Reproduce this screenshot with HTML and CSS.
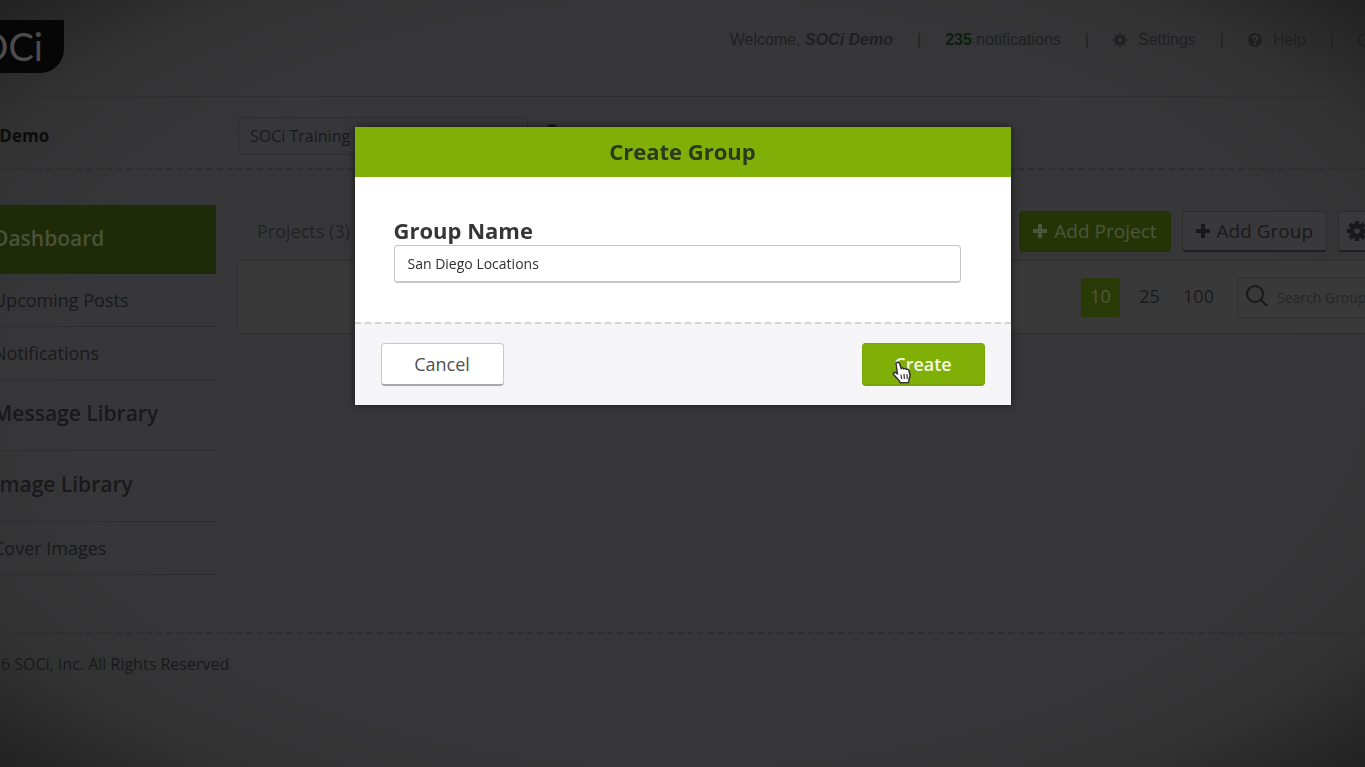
FILE: index.html
```html
<!DOCTYPE html>
<html lang="en">
<head>
    <meta charset="UTF-8">
    <meta name="viewport" content="width=device-width, initial-scale=1.0">
    <title>SOCi - Create Group</title>
    <link rel="stylesheet" href="styles.css">
</head>
<body>
    <div class="page">
        <header class="header">
            <a class="logo" href="#">SOCi</a>
            <nav class="top-nav">
                <span>Welcome, <b><i>SOCi Demo</i></b></span>
                <span class="sep">|</span>
                <a href="#"><b class="count">235</b> notifications</a>
                <span class="sep">|</span>
                <a class="with-icon" href="#">
                    <svg width="14" height="14" viewBox="0 0 16 16"><circle cx="8" cy="8" r="4" fill="none" stroke="currentColor" stroke-width="3"/><path d="M8 0v3M8 13v3M0 8h3M13 8h3M2.3 2.3l2.2 2.2M11.5 11.5l2.2 2.2M2.3 13.7l2.2-2.2M11.5 4.5l2.2-2.2" stroke="currentColor" stroke-width="2.6"/></svg>
                    Settings
                </a>
                <span class="sep">|</span>
                <a class="with-icon" href="#">
                    <svg width="14" height="14" viewBox="0 0 16 16"><circle cx="8" cy="8" r="8" fill="currentColor"/><path d="M5.6 6.2c0-3.2 5-3.2 5 0 0 1.8-2.4 1.8-2.4 3.6M8.2 11.2v1.8" fill="none" stroke="#39393a" stroke-width="1.8"/></svg>
                    Help
                </a>
                <span class="sep">|</span>
                <a class="with-icon" href="#" aria-label="Log out">
                    <svg width="14" height="14" viewBox="0 0 16 16"><circle cx="8" cy="8" r="7" fill="none" stroke="currentColor" stroke-width="2"/></svg>
                </a>
            </nav>
        </header>

        <div class="account-bar">
            <h1>SOCi Demo</h1>
            <select class="account-select" aria-label="Account">
                <option>SOCi Training</option>
            </select>
            <svg class="info" width="16" height="26" viewBox="0 0 16 26"><circle cx="8" cy="8" r="7" fill="currentColor"/></svg>
        </div>

        <div class="columns">
            <nav class="sidebar">
                <a class="section active" href="#">Dashboard</a>
                <a href="#">Upcoming Posts</a>
                <a href="#">Notifications</a>
                <a class="section" href="#">Message Library</a>
                <a class="section" href="#">Image Library</a>
                <a href="#">Cover Images</a>
            </nav>

            <main class="main">
                <div class="toolbar">
                    <h2>Projects (3)</h2>
                    <button class="tool primary" type="button">
                        <svg width="14" height="14" viewBox="0 0 14 14"><path d="M7 0v14M0 7h14" stroke="currentColor" stroke-width="4"/></svg>
                        Add Project
                    </button>
                    <button class="tool" type="button">
                        <svg width="14" height="14" viewBox="0 0 14 14"><path d="M7 0v14M0 7h14" stroke="currentColor" stroke-width="4"/></svg>
                        Add Group
                    </button>
                    <button class="tool gear" type="button" aria-label="Options">
                        <svg width="20" height="20" viewBox="0 0 16 16"><circle cx="8" cy="8" r="4" fill="none" stroke="currentColor" stroke-width="3.6"/><path d="M8 0v3M8 13v3M0 8h3M13 8h3M2.3 2.3l2.2 2.2M11.5 11.5l2.2 2.2M2.3 13.7l2.2-2.2M11.5 4.5l2.2-2.2" stroke="currentColor" stroke-width="3.4"/></svg>
                    </button>
                </div>
                <div class="panel">
                    <div class="page-size">
                        <button class="current" type="button">10</button>
                        <button type="button">25</button>
                        <button type="button">100</button>
                    </div>
                    <label class="search">
                        <svg width="24" height="24" viewBox="0 0 24 24"><circle cx="10" cy="9" r="8" fill="none" stroke="currentColor" stroke-width="2"/><path d="M16 15l6 6" stroke="currentColor" stroke-width="2"/></svg>
                        <input type="text" placeholder="Search Groups" aria-label="Search Groups">
                    </label>
                </div>
            </main>
        </div>

        <footer class="footer">© 2016 SOCi, Inc. All Rights Reserved</footer>
    </div>

    <div class="overlay">
        <form class="modal" role="dialog" aria-labelledby="modal-title">
            <h2 class="modal-title" id="modal-title">Create Group</h2>
            <div class="modal-body">
                <label for="group-name">Group Name</label>
                <input type="text" id="group-name" value="San Diego Locations">
            </div>
            <div class="modal-footer">
                <button class="btn" type="button">Cancel</button>
                <button class="btn btn-create" type="button">
                    Create
                    <svg class="pointer" width="20" height="24" viewBox="0 0 20 24"><path d="M5 2.5c1.3-.8 2.3 0 2.7 1.3l1.6 4.7c.8-.9 2.1-.7 2.6.3.8-.7 2-.5 2.5.5 1.2-.5 2.3.2 2.6 1.4l1 4.3c.3 1.5-.5 2.800-1 4.200l-.4 3.300-8.300.3c-.3-2.300-2.600-3.700-4.300-5.600l-2.400-2.700c-.9-1.200.4-2.500 1.800-2l2 1.100L4 4.200c-.2-.7.3-1.400 1-1.700z" fill="#fff" stroke="#333" stroke-width="1.5"/><path d="M9 14.500l.6 4.500M12 14l.4 5M15 14l.2 5" stroke="#333" stroke-width="1.2"/></svg>
                </button>
            </div>
        </form>
    </div>
</body>
</html>
```
FILE: styles.css
```css
:root {
    --green: #80af08;
    --bg: #373739;
    --ink: #19191b;
    --line: #2e2e2f;
}

* {
    box-sizing: border-box;
}

body {
    margin: 0;
    min-height: 100vh;
    overflow: hidden;
    font-family: "Open Sans", sans-serif;
    font-size: 18px;
    color: var(--ink);
    background: radial-gradient(ellipse at center, var(--bg) 0%, var(--bg) 64%, #323233 84%, #222223 100%);
}

a {
    color: inherit;
    text-decoration: none;
}

h1, h2 {
    margin: 0;
}

button, input, select {
    font-family: inherit;
    color: inherit;
}

/* page runs past the window on both sides */
.page {
    margin: 0 -60px 0 -44px;
}

/* header */
.header {
    display: flex;
    justify-content: space-between;
    align-items: flex-start;
    height: 97px;
    padding: 20px 53px 0 0;
    border-bottom: 1px solid var(--line);
}

.logo {
    width: 108px;
    height: 53px;
    padding-right: 21px;
    border-radius: 0 0 24px 0;
    background: #060606;
    color: #4c4c4c;
    font-family: Lato, sans-serif;
    font-size: 38px;
    line-height: 53px;
    text-align: right;
}

.top-nav {
    display: flex;
    align-items: center;
    font-family: "Liberation Sans", sans-serif;
    font-size: 16px;
    line-height: 40px;
    color: #202021;
}

.top-nav .sep {
    margin: 0 24px;
}

.top-nav .count {
    color: #0c200c;
}

.with-icon {
    display: flex;
    align-items: center;
    gap: 11px;
}

/* account bar */
.account-bar {
    display: flex;
    align-items: center;
    height: 73px;
    padding-top: 6px;
    border-bottom: 2px dashed var(--line);
}

.account-bar h1 {
    width: 282px;
    font-size: 17px;
    color: #0c0c0d;
}

.account-select {
    width: 290px;
    height: 38px;
    padding: 0 11px;
    border: 1px solid var(--line);
    border-radius: 4px;
    background: transparent;
    font-size: 16px;
    appearance: none;
}

.info {
    margin-left: 16px;
}

/* columns */
.columns {
    display: flex;
    gap: 21px;
    padding-top: 35px;
}

.sidebar {
    width: 260px;
    flex-shrink: 0;
}

.sidebar a {
    display: block;
    padding-left: 37px;
    border-bottom: 1px solid var(--line);
    font-size: 18px;
    line-height: 52px;
}

.sidebar .section {
    padding-bottom: 3px;
    font-size: 21px;
    font-weight: 600;
    line-height: 67px;
}

.sidebar .active {
    padding-bottom: 2px;
    border-bottom: 0;
    background: #1f2a09;
    color: #4a5238;
}

.main {
    flex: 1;
}

.toolbar {
    display: flex;
    align-items: center;
    gap: 11px;
    height: 55px;
    padding-bottom: 3px;
}

.toolbar h2 {
    flex: 1;
    padding-left: 20px;
    font-size: 18px;
    font-weight: 400;
    color: #222224;
}

.tool {
    display: flex;
    align-items: center;
    gap: 7px;
    height: 41px;
    padding: 0 13px;
    border: 1px solid #2d2d2e;
    border-bottom: 2px solid #202021;
    border-radius: 4px;
    background: #39383a;
    font-size: 19px;
}

.tool.primary {
    border-color: #243206;
    background: #253407;
    color: #4d563c;
}

.tool.gear {
    width: 87px;
    padding: 0 8px;
}

.panel {
    display: flex;
    justify-content: flex-end;
    align-items: center;
    gap: 19px;
    height: 74px;
    border: 1px solid var(--line);
    border-radius: 4px;
    background: #393939;
}

.page-size {
    display: flex;
    gap: 10px;
}

.page-size button {
    width: 39px;
    height: 39px;
    padding: 0 0 2px;
    border: 0;
    border-radius: 3px;
    background: transparent;
    font-size: 18px;
}

.page-size .current {
    background: #2a3a06;
    color: #50583f;
}

.search {
    display: flex;
    align-items: center;
    gap: 8px;
    width: 187px;
    height: 41px;
    padding-left: 7px;
    border: 1px solid var(--line);
    border-radius: 4px;
}

.search svg {
    flex-shrink: 0;
}

.search input {
    width: 100%;
    padding: 0;
    border: 0;
    background: transparent;
    font-size: 14px;
}

.search input::placeholder {
    color: #252527;
}

/* footer */
.footer {
    margin-top: 57px;
    border-top: 2px dashed var(--line);
    font-size: 16px;
    line-height: 60px;
}

/* modal */
.overlay {
    position: fixed;
    inset: 0;
    padding-top: 127px;
}

.modal {
    width: 656px;
    max-width: 100%;
    margin: 0 auto;
    background: #fff;
    box-shadow: 0 0 8px rgba(0, 0, 0, 0.6);
}

.modal-title {
    padding-bottom: 2px;
    background: var(--green);
    color: #2c3a1c;
    font-size: 22px;
    line-height: 48px;
    text-align: center;
}

.modal-body {
    padding: 39px 50px 39px 39px;
}

.modal-body label {
    display: block;
    font-size: 22px;
    font-weight: 700;
    line-height: 29px;
    color: #363638;
}

.modal-body input {
    display: block;
    width: 100%;
    height: 38px;
    padding: 0 13px;
    border: 1px solid #c6c6c8;
    border-bottom-width: 2px;
    border-radius: 4px;
    background: #fff;
    font-size: 14px;
    color: #303032;
}

.modal-footer {
    display: flex;
    justify-content: space-between;
    padding: 19px 26px;
    border-top: 2px dashed #d4d4d6;
    background: #f5f4f7;
}

.btn {
    position: relative;
    width: 123px;
    height: 43px;
    border: 1px solid #c8c8ca;
    border-bottom: 2px solid #a8a8aa;
    border-radius: 4px;
    background: #fff;
    font-size: 18px;
    color: #505052;
}

.btn-create {
    border-color: #78a40a;
    background: var(--green);
    color: #f4f9e4;
    font-weight: 600;
}

.pointer {
    position: absolute;
    left: 29px;
    top: 16px;
}
```
